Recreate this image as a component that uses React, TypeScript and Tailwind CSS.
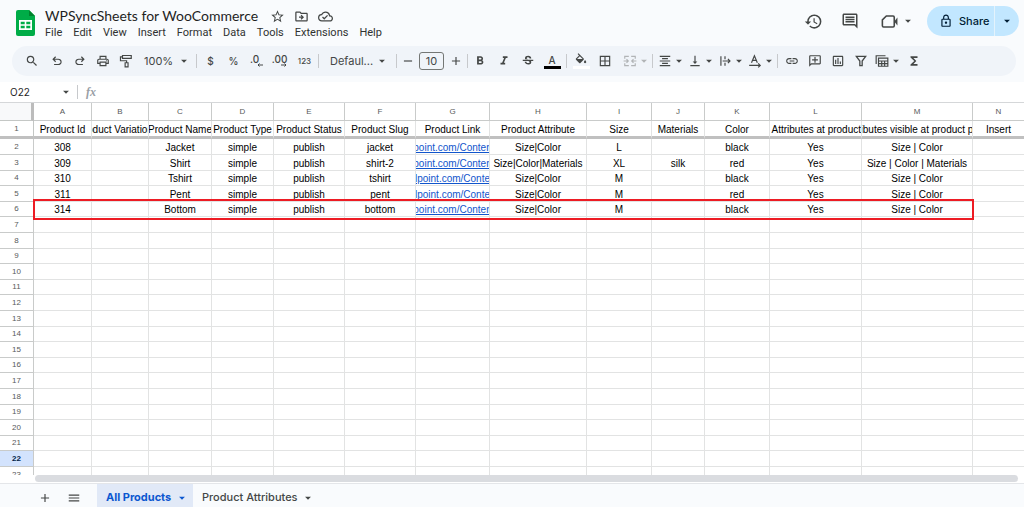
import {
  MdAdd,
  MdArrowDropDown,
  MdBorderAll,
  MdFormatAlignCenter,
  MdFormatBold,
  MdFormatItalic,
  MdFunctions,
  MdHistory,
  MdLink,
  MdMenu,
  MdOutlineAddComment,
  MdOutlineCloudDone,
  MdOutlineDriveFileMove,
  MdOutlineInsertChart,
  MdOutlineInsertComment,
  MdOutlineLock,
  MdOutlinePrint,
  MdRemove,
  MdSearch,
  MdStarOutline,
  MdStrikethroughS,
  MdVerticalAlignBottom,
} from 'react-icons/md';

import { ReactNode } from 'react';
import clsx from 'clsx';

const MENUS = [
  'File',
  'Edit',
  'View',
  'Insert',
  'Format',
  'Data',
  'Tools',
  'Extensions',
  'Help',
];

const COLUMNS = [
  { id: 'A', width: 'w-[58px]', title: 'Product Id' },
  { id: 'B', width: 'w-[57px]', title: 'oduct Variation' },
  { id: 'C', width: 'w-[63px]', title: 'Product Name' },
  { id: 'D', width: 'w-[62px]', title: 'Product Type' },
  { id: 'E', width: 'w-[71px]', title: 'Product Status' },
  { id: 'F', width: 'w-[71px]', title: 'Product Slug' },
  { id: 'G', width: 'w-[74px]', title: 'Product Link' },
  { id: 'H', width: 'w-[97px]', title: 'Product Attribute' },
  { id: 'I', width: 'w-[65px]', title: 'Size' },
  { id: 'J', width: 'w-[53px]', title: 'Materials' },
  { id: 'K', width: 'w-[65px]', title: 'Color' },
  { id: 'L', width: 'w-[92px]', title: 'y Attributes at product', alignEnd: true },
  { id: 'M', width: 'w-[111px]', title: 'ibutes visible at product p' },
  { id: 'N', width: '', title: 'Insert' },
];

const PRODUCTS = [
  ['308', '', 'Jacket', 'simple', 'publish', 'jacket', 'point.com/Conten', 'Size|Color', 'L', '', 'black', 'Yes', 'Size | Color', ''],
  ['309', '', 'Shirt', 'simple', 'publish', 'shirt-2', 'point.com/Conten', 'Size|Color|Materials', 'XL', 'silk', 'red', 'Yes', 'Size | Color | Materials', ''],
  ['310', '', 'Tshirt', 'simple', 'publish', 'tshirt', 'lpoint.com/Conte', 'Size|Color', 'M', '', 'black', 'Yes', 'Size | Color', ''],
  ['311', '', 'Pent', 'simple', 'publish', 'pent', 'lpoint.com/Conte', 'Size|Color', 'M', '', 'red', 'Yes', 'Size | Color', ''],
  ['314', '', 'Bottom', 'simple', 'publish', 'bottom', 'point.com/Conten', 'Size|Color', 'M', '', 'black', 'Yes', 'Size | Color', ''],
];

const LAST_ROW = 23;
const ACTIVE_ROW = 22;
const HIGHLIGHTED_ROW = 6;
const LINK_COLUMN = 6;

const rows = Array.from({ length: LAST_ROW - 1 }, (_, i) => i + 2);

const Caret = () => <MdArrowDropDown className="size-3.5 shrink-0" />;

const Divider = ({ className }: { className?: string }) => (
  <div className={clsx('h-3.5 w-px shrink-0 bg-[#c7c9cc]', className)} />
);

interface ToolProps {
  label: string;
  className?: string;
  children: ReactNode;
}

const Tool = ({ label, className = 'w-[23px]', children }: ToolProps) => (
  <button
    aria-label={label}
    className={clsx('flex h-6 shrink-0 items-center justify-center', className)}
  >
    {children}
  </button>
);

const SheetsLogo = () => (
  <svg viewBox="0 0 19 26" className="h-[26px] w-[19px]">
    <path d="M2 0h11l6 6v18a2 2 0 0 1-2 2H2a2 2 0 0 1-2-2V2a2 2 0 0 1 2-2z" fill="#00ac47" />
    <path d="M13 0l6 6h-6z" fill="#00832d" />
    <path
      d="M3 10h13v10H3zM4.700 11.700v2.500h4v-2.500zm5.600 0v2.500h4v-2.500zM4.700 15.800v2.500h4v-2.500zm5.600 0v2.500h4v-2.500z"
      fill="#fff"
      fillRule="evenodd"
    />
  </svg>
);

const UndoIcon = () => (
  <svg viewBox="0 0 24 24" fill="currentColor" className="size-3.5">
    <path d="M7 19v-2h7.100q1.575 0 2.738-1T18 13.500T16.838 11T14.100 10H7.800l2.600 2.600L9 14L4 9l5-5l1.400 1.400L7.800 8h6.300q2.425 0 4.163 1.575T20 13.500t-1.737 3.925T14.100 19z" />
  </svg>
);

const RedoIcon = () => (
  <svg viewBox="0 0 24 24" fill="currentColor" className="size-3.5">
    <path d="M9.900 19q-2.425 0-4.163-1.575T4 13.500t1.738-3.925T9.900 8h6.300l-2.600-2.600L15 4l5 5l-5 5l-1.400-1.400l2.600-2.600H9.900q-1.575 0-2.738 1T6 13.500T7.163 16T9.900 17H17v2z" />
  </svg>
);

const PaintRollerIcon = () => (
  <svg viewBox="0 0 24 24" fill="none" stroke="currentColor" strokeWidth="2" className="size-3.5">
    <path d="M6 2.500h15v5H6zM6 5H2.500v6.500H13V15M10.500 15h5v7h-5z" />
  </svg>
);

const FillColorIcon = () => (
  <svg viewBox="0 0 24 18" fill="currentColor" className="h-[11px] w-3.5">
    <path d="M16.560 8.940L7.620 0L6.210 1.410l2.380 2.380l-5.150 5.150a1.490 1.490 0 0 0 0 2.120l5.500 5.500c.290.290.680.440 1.060.440s.770-.150 1.060-.440l5.500-5.500c.590-.580.590-1.530 0-2.120zM5.210 10L10 5.210L14.790 10zM19 11.500s-2 2.170-2 3.500c0 1.100.900 2 2 2s2-.900 2-2c0-1.330-2-3.500-2-3.500z" />
  </svg>
);

const MergeIcon = () => (
  <svg viewBox="0 0 24 24" fill="none" stroke="currentColor" strokeWidth="2" className="size-3.5">
    <path d="M10 4H3v4M3 16v4h7M14 4h7v4M21 16v4h-7M1 12h8M6 9l3 3-3 3M23 12h-8M18 9l-3 3 3 3" />
  </svg>
);

const OverflowIcon = () => (
  <svg viewBox="0 0 24 24" fill="none" stroke="currentColor" strokeWidth="2" className="size-3.5">
    <path d="M5 4v16M12 4v5M12 15v5M8 12h12M17 8.500l3.500 3.500-3.500 3.500" />
  </svg>
);

const RotationIcon = () => (
  <svg viewBox="0 0 24 24" fill="none" stroke="currentColor" strokeWidth="2" className="size-3.5">
    <path d="M6 15L11 3l5 12M8 11h6M2 19.500h18M17.500 16l3.500 3.500-3.500 3.500" />
  </svg>
);

const FilterIcon = () => (
  <svg viewBox="0 0 24 24" fill="none" stroke="currentColor" strokeWidth="2.200" className="size-3.5">
    <path d="M4 4h16l-6 8v8h-4v-8z" />
  </svg>
);

const TableViewsIcon = () => (
  <svg viewBox="0 0 24 24" fill="none" stroke="currentColor" strokeWidth="2" className="size-3.5">
    <path d="M18 3H2v14" />
    <path d="M6 7h16v14H6zM6 12h16M6 16.500h16M11.500 12v9M16.500 12v9" />
  </svg>
);

const MeetIcon = () => (
  <svg viewBox="0 0 24 24" className="size-[19px]">
    <path
      d="M8 5h8.500a1.500 1.500 0 0 1 1.500 1.500v11a1.500 1.500 0 0 1-1.500 1.500h-12A1.500 1.500 0 0 1 3 17.500V10z"
      fill="none"
      stroke="currentColor"
      strokeWidth="2"
    />
    <path d="M18 12l4-5v10z" fill="currentColor" />
  </svg>
);

const Header = () => (
  <header className="flex h-[46px] shrink-0 items-start pl-4 pr-[5px]">
    <div className="pt-[10px]">
      <SheetsLogo />
    </div>
    <div className="flex flex-col pl-[10px] pt-2">
      <div className="flex h-4 items-center text-[#444746]">
        <h1 className="mr-3 font-[Lato,sans-serif] text-[14px] leading-4 text-[#1f1f1f]">
          WPSyncSheets for WooCommerce
        </h1>
        <div className="flex gap-[9px]">
          <button aria-label="Star">
            <MdStarOutline className="size-[15px]" />
          </button>
          <button aria-label="Move">
            <MdOutlineDriveFileMove className="size-[15px]" />
          </button>
          <button aria-label="Document status">
            <MdOutlineCloudDone className="size-[15px]" />
          </button>
        </div>
      </div>
      <nav className="mt-px flex gap-[11px] font-[Roboto,sans-serif] text-[11px] leading-4 text-[#303231]">
        {MENUS.map((menu) => (
          <button key={menu}>{menu}</button>
        ))}
      </nav>
    </div>
    <div className="ml-auto flex items-center pt-1.5 text-[#444746]">
      <button aria-label="Last edit" className="mr-[18px]">
        <MdHistory className="size-[19px]" />
      </button>
      <button aria-label="Comments" className="mr-[21px]">
        <MdOutlineInsertComment className="size-[18px]" />
      </button>
      <button aria-label="Join a call" className="mr-3 flex items-center gap-0.5">
        <MeetIcon />
        <Caret />
      </button>
      <div className="flex h-[30px] overflow-hidden rounded-full bg-[#c2e7ff] text-[#001d35]">
        <button className="flex w-[67px] items-center gap-1.5 pl-3 text-[11px] font-medium">
          <MdOutlineLock className="size-3.5" />
          Share
        </button>
        <button
          aria-label="Share options"
          className="flex w-[25px] items-center justify-center border-l border-[#e4f3fc]"
        >
          <Caret />
        </button>
      </div>
    </div>
  </header>
);

const Toolbar = () => (
  <div className="ml-3 mr-2 flex h-[30px] shrink-0 items-center rounded-full bg-[#f0f4f9] pl-2 text-[11px] text-[#444746]">
    <Tool label="Search the menus" className="mr-0.5 w-[23px]">
      <MdSearch className="size-3.5" />
    </Tool>
    <Tool label="Undo">
      <UndoIcon />
    </Tool>
    <Tool label="Redo">
      <RedoIcon />
    </Tool>
    <Tool label="Print">
      <MdOutlinePrint className="size-3.5" />
    </Tool>
    <Tool label="Paint format">
      <PaintRollerIcon />
    </Tool>
    <button className="flex w-[59px] shrink-0 items-center justify-between pl-[7px] pr-[5px]">
      100%
      <Caret />
    </button>
    <Divider className="mr-0.5" />
    <Tool label="Format as currency">
      <span className="text-[10px] font-medium">$</span>
    </Tool>
    <Tool label="Format as percent">
      <span className="text-[10px] font-medium">%</span>
    </Tool>
    <Tool label="Decrease decimal places">
      <span className="flex flex-col items-end text-[10px] font-medium leading-[8px]">
        <span className="pr-1">.0</span>
        <svg viewBox="0 0 6 4" className="h-1 w-1.5" fill="none" stroke="currentColor">
          <path d="M6 2H1M2.500 0.500L1 2l1.500 1.500" />
        </svg>
      </span>
    </Tool>
    <Tool label="Increase decimal places">
      <span className="flex flex-col items-end text-[10px] font-medium leading-[8px]">
        <span>.00</span>
        <svg viewBox="0 0 6 4" className="h-1 w-1.5" fill="none" stroke="currentColor">
          <path d="M0 2h5M3.500 0.500L5 2L3.500 3.500" />
        </svg>
      </span>
    </Tool>
    <Tool label="More formats" className="w-[27px]">
      <span className="text-[8px] font-medium">123</span>
    </Tool>
    <Divider className="mr-0.5" />
    <button className="flex w-[75px] shrink-0 items-center justify-between pl-[9px] pr-[7px]">
      Defaul...
      <Caret />
    </button>
    <Divider />
    <Tool label="Decrease font size" className="w-[22px]">
      <MdRemove className="size-3.5" />
    </Tool>
    <input
      aria-label="Font size"
      defaultValue="10"
      className="h-[18px] w-[25px] shrink-0 rounded-[3px] border border-[#747775] text-center text-[11px]"
    />
    <Tool label="Increase font size">
      <MdAdd className="size-3.5" />
    </Tool>
    <Divider />
    <Tool label="Bold" className="w-6">
      <MdFormatBold className="size-3.5" />
    </Tool>
    <Tool label="Italic" className="w-6">
      <MdFormatItalic className="size-3.5" />
    </Tool>
    <Tool label="Strikethrough" className="w-6">
      <MdStrikethroughS className="size-3.5" />
    </Tool>
    <Tool label="Text color" className="w-6">
      <span className="flex flex-col items-center text-[10px] font-medium leading-3">
        A
        <span className="h-[3px] w-[17px] bg-black" />
      </span>
    </Tool>
    <Divider className="mx-0.5" />
    <Tool label="Fill color" className="w-6">
      <span className="flex flex-col items-center">
        <FillColorIcon />
        <span className="mt-0.5 h-[3px] w-[17px] bg-white" />
      </span>
    </Tool>
    <Tool label="Borders" className="w-6">
      <MdBorderAll className="size-3.5" />
    </Tool>
    <Tool label="Merge cells" className="w-[35px] pl-1 text-[#b1b4b6]">
      <MergeIcon />
      <Caret />
    </Tool>
    <Divider className="mr-1" />
    <Tool label="Horizontal align" className="w-[30px]">
      <MdFormatAlignCenter className="size-3.5" />
      <Caret />
    </Tool>
    <Tool label="Vertical align" className="w-[30px]">
      <MdVerticalAlignBottom className="size-3.5" />
      <Caret />
    </Tool>
    <Tool label="Text wrapping" className="w-[30px]">
      <OverflowIcon />
      <Caret />
    </Tool>
    <Tool label="Text rotation" className="w-[30px]">
      <RotationIcon />
      <Caret />
    </Tool>
    <Divider className="mr-0.5" />
    <Tool label="Insert link">
      <MdLink className="size-3.5" />
    </Tool>
    <Tool label="Insert comment">
      <MdOutlineAddComment className="size-3.5 -scale-x-100" />
    </Tool>
    <Tool label="Insert chart">
      <MdOutlineInsertChart className="size-3.5" />
    </Tool>
    <Tool label="Create a filter">
      <FilterIcon />
    </Tool>
    <Tool label="Table views" className="ml-0.5 w-[30px]">
      <TableViewsIcon />
      <Caret />
    </Tool>
    <Tool label="Functions" className="w-5">
      <MdFunctions className="size-3.5" />
    </Tool>
  </div>
);

const FormulaBar = () => (
  <div className="mt-1.5 flex h-[21px] shrink-0 items-center border-b border-[#d5d7d9] bg-white text-[#444746]">
    <input
      aria-label="Name box"
      defaultValue="O22"
      className="w-[59px] pl-[10px] text-[10px] text-[#1f1f1f]"
    />
    <Caret />
    <Divider className="ml-1 mr-2" />
    <span className="font-['Liberation_Serif',serif] text-xs font-bold italic text-[#9aa0a6]">
      fx
    </span>
    <input aria-label="Formula" className="min-w-0 flex-1 pl-2 text-[10px]" />
  </div>
);

interface CellProps {
  alignEnd?: boolean;
  children: ReactNode;
}

const Cell = ({ alignEnd, children }: CellProps) => (
  <div
    className={clsx(
      'flex h-3.5 overflow-hidden whitespace-nowrap leading-4',
      alignEnd ? 'justify-end' : 'justify-center'
    )}
  >
    {children}
  </div>
);

const Grid = () => (
  <div className="min-h-0 flex-1 overflow-hidden bg-white font-['Liberation_Sans',Arial,sans-serif]">
    <table className="w-full min-w-[1020px] table-fixed border-separate border-spacing-0 text-[10px] text-black">
      <thead>
        <tr className="h-[18px] text-[8px] text-[#575a5a]">
          <th
            aria-label="Select all"
            className="w-[34px] border-b border-r-[3px] border-b-[#c4c7c5] border-r-[#bcbcbc] bg-[#f8f9fa] p-0"
          />
          {COLUMNS.map((column) => (
            <th
              key={column.id}
              className={clsx(
                'border-b border-r border-[#c9cbca] p-0 font-normal last:border-r-0',
                column.width
              )}
            >
              {column.id}
            </th>
          ))}
        </tr>
        <tr className="h-[18px]">
          <th className="border-b-[3px] border-r border-b-[#c0c0c0] border-r-[#c4c7c5] p-0 text-[8px] font-normal text-[#575a5a]">
            1
          </th>
          {COLUMNS.map((column) => (
            <th
              key={column.id}
              className="border-b-[3px] border-r border-b-[#c0c0c0] border-r-[#e2e3e3] p-0 font-normal last:border-r-0"
            >
              <Cell alignEnd={column.alignEnd}>
                <span>{column.title}</span>
              </Cell>
            </th>
          ))}
        </tr>
      </thead>
      <tbody>
        {rows.map((row, rowIdx) => (
          <tr
            key={row}
            className={rowIdx % 5 === 2 || rowIdx % 5 === 4 ? 'h-[15px]' : 'h-4'}
          >
            <th
              className={clsx(
                'border-b border-r border-[#c9cbca] p-0 text-[8px] leading-3',
                row === ACTIVE_ROW
                  ? 'bg-[#d3e3fd] font-bold text-[#041e49]'
                  : 'font-normal text-[#575a5a]'
              )}
            >
              {row}
            </th>
            {COLUMNS.map((column, colIdx) => {
              const value = PRODUCTS[rowIdx]?.[colIdx];

              return (
                <td
                  key={column.id}
                  className="relative border-b border-r border-[#e2e3e3] p-0 last:border-r-0"
                >
                  {value && (
                    <Cell>
                      {colIdx === LINK_COLUMN ? (
                        <a href="#" className="text-[#1155cc] underline">
                          {value}
                        </a>
                      ) : (
                        <span>{value}</span>
                      )}
                    </Cell>
                  )}
                  {row === HIGHLIGHTED_ROW && colIdx === 0 && (
                    <div className="pointer-events-none absolute -left-px -top-[3px] z-10 h-[21px] w-[941px] border-2 border-[#ed1c24]" />
                  )}
                </td>
              );
            })}
          </tr>
        ))}
      </tbody>
    </table>
  </div>
);

const SheetTabs = () => (
  <footer className="flex h-6 shrink-0 items-center border-t border-[#e4e6e9] text-[11px] font-medium text-[#444746]">
    <button aria-label="Add sheet" className="ml-[38px] pt-1">
      <MdAdd className="size-3.5" />
    </button>
    <button aria-label="All sheets" className="ml-[15px] mr-4 pt-1">
      <MdMenu className="size-3.5" />
    </button>
    <button className="flex h-full w-24 items-center justify-between bg-[#e1e9f7] pl-[9px] pr-1 pt-1 font-bold text-[#0b57d0]">
      All Products
      <Caret />
    </button>
    <button className="flex h-full w-[122px] items-center justify-between pl-[9px] pt-1">
      Product Attributes
      <Caret />
    </button>
  </footer>
);

export default function App() {
  return (
    <div className="flex h-screen flex-col overflow-hidden bg-[#f9fbfd] font-[Inter,sans-serif]">
      <Header />
      <Toolbar />
      <FormulaBar />
      <Grid />
      <div className="h-2 shrink-0 bg-white pl-[35px] pr-1.5">
        <div className="h-[7px] rounded-full bg-[#dadce0]" />
      </div>
      <SheetTabs />
    </div>
  );
}
